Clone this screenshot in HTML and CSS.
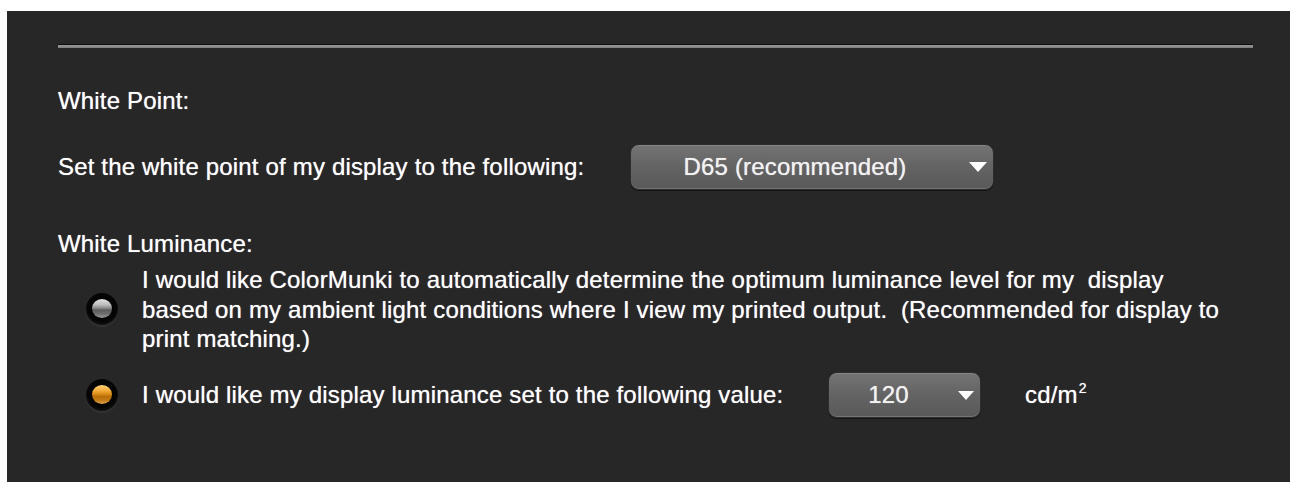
FILE: index.html
```html
<!DOCTYPE html>
<html lang="en">
<head>
<meta charset="utf-8">
<title>Display Settings</title>
<link rel="stylesheet" href="styles.css">
</head>
<body>
<div class="panel">
  <div class="rule"></div>

  <div class="heading heading-first">White Point:</div>

  <div class="row">
    <span class="label label-wp">Set the white point of my display to the following:</span>
    <div class="select select-wide">
      <span class="select-text">D65 (recommended)</span>
      <span class="select-arrow"></span>
    </div>
  </div>

  <div class="heading heading-lum">White Luminance:</div>

  <div class="option option-auto">
    <span class="radio"><span class="ball ball-off"></span></span>
    <p class="option-text">I would like ColorMunki to automatically determine the optimum luminance level for my&nbsp; display<br>based on my ambient light conditions where I view my printed output.&nbsp; (Recommended for display to<br>print matching.)</p>
  </div>

  <div class="option option-value">
    <span class="radio"><span class="ball ball-on"></span></span>
    <span class="label label-lum">I would like my display luminance set to the following value:</span>
    <div class="select select-narrow">
      <span class="select-text">120</span>
      <span class="select-arrow"></span>
    </div>
    <span class="unit">cd/m<sup>2</sup></span>
  </div>
</div>
</body>
</html>
```

FILE: styles.css
```css
html, body {
  margin: 0;
  padding: 0;
  background: #ffffff;
}

body {
  font-family: "Liberation Sans", Arial, Helvetica, sans-serif;
  font-size: 24px;
  line-height: 29.5px;
  letter-spacing: 0.17px;
  color: #ffffff;
  text-shadow: 0 0 0.8px rgba(255, 255, 255, 0.75);
  overflow: hidden;
}

.panel {
  margin: 11px 0 0 7px;
  height: 471px;
  box-sizing: border-box;
  padding: 33px 37px 0 51px;
  background: #272727;
}

/* engraved divider */
.rule {
  height: 3px;
  border-top: 1px solid #0c0c0c;
  background: linear-gradient(#9a9a9a, #7c7c7c);
}

.heading-first {
  margin-top: 38px;
}

.heading-lum {
  margin-top: 39px;
}

.row {
  display: flex;
  align-items: center;
  margin-top: 28.5px;
}

.label-wp {
  width: 572px;
  flex: none;
}

/* drop-down buttons */
.select {
  display: flex;
  align-items: center;
  height: 46px;
  box-sizing: border-box;
  padding-right: 6px;
  border: 1px solid #2e2e2e;
  border-radius: 9px;
  background: linear-gradient(#747474, #636363 50%, #595959);
  box-shadow: inset 0 1px 0 rgba(255, 255, 255, 0.12),
              inset 0 -1px 0 rgba(255, 255, 255, 0.16),
              0 1px 1px rgba(0, 0, 0, 0.5);
  color: #f2f2f2;
  flex: none;
}

.select-wide {
  width: 364px;
}

.select-narrow {
  width: 153px;
}

.select-text {
  flex: 1;
  text-align: center;
}

.select-arrow {
  width: 0;
  height: 0;
  margin-left: 10px;
  border-left: 9px solid transparent;
  border-right: 9px solid transparent;
  border-top: 10px solid #ffffff;
}

.select-narrow .select-arrow {
  border-left-width: 8.5px;
  border-right-width: 8.5px;
  border-top-width: 9px;
}

/* radio options */
.option {
  display: flex;
  align-items: center;
  padding-left: 28px;
}

.option-auto {
  margin-top: 6.5px;
}

.option-value {
  margin-top: 18.5px;
  height: 46px;
}

.option-text {
  margin: 0;
}

.radio {
  width: 32px;
  height: 32px;
  flex: none;
  margin-right: 24px;
  border-radius: 50%;
  background: radial-gradient(circle at 50% 45%, #000000 0, #050505 60%, #1a1a1a 80%, rgba(40, 40, 40, 0) 100%);
  display: flex;
  align-items: center;
  justify-content: center;
  box-shadow: 0 2px 2px rgba(255, 255, 255, 0.06);
}

.ball {
  width: 20px;
  height: 19px;
  border-radius: 50%;
  margin-top: -1px;
}

.ball-off {
  background: linear-gradient(#e2e2e2 0, #bdbdbd 30%, #8a8a8a 48%, #5c5c5c 58%, #6e6e6e 78%, #9a9a9a 100%);
}

.ball-on {
  background: linear-gradient(#ffd27a 0, #f2ac3a 30%, #d98c16 48%, #b86d08 60%, #c27a16 80%, #e0a450 100%);
}

.label-lum {
  width: 686px;
  flex: none;
}

.unit {
  margin-left: 44px;
}

.unit sup {
  font-size: 14px;
  line-height: 0;
  vertical-align: 10px;
  margin-left: 1px;
}
```
